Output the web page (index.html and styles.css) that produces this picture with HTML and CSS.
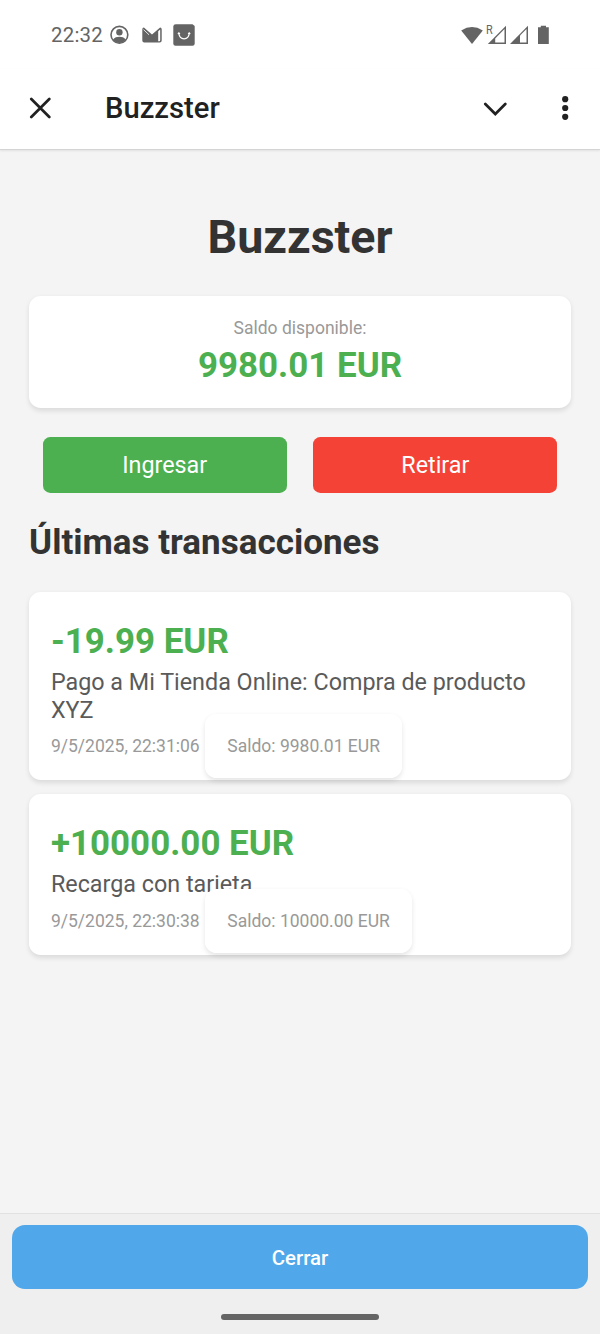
FILE: index.html
```html
<!DOCTYPE html>
<html lang="es">
<head>
<meta charset="utf-8">
<title>Buzzster</title>
<link rel="stylesheet" href="styles.css">
</head>
<body>
<div class="screen">
  <div class="status">
    <span class="time">22:32</span>
    <svg class="s-user" width="20" height="20" viewBox="0 0 20 20"><circle cx="10.4" cy="9.8" r="8.4" fill="none" stroke="#646464" stroke-width="1.6"/><circle cx="10.4" cy="7.3" r="3.2" fill="#646464"/><path d="M4 14.600C5.700 12.500 7.900 11.800 10.400 11.800s4.700.7 6.400 2.800A8.200 8.200 0 0 1 10.400 18a8.200 8.200 0 0 1-6.400-3.400z" fill="#646464"/></svg>
    <svg class="s-mail" width="20" height="16" viewBox="0 0 20 16"><path d="M.3 2.200Q.3.500 1.900.500L10 7.500 18.100.500Q19.700.500 19.700 2.200V13.500Q19.700 15.500 17.700 15.500H2.300Q.3 15.500.3 13.500z" fill="#646464"/><path d="M16.200 4.200V14.300H17.300Q18.200 14.300 18.200 13V2.400z" fill="#fff"/><path d="M1.500 2.600 7 7.800" stroke="#fff" stroke-width=".8"/></svg>
    <svg class="s-bag" width="22" height="22" viewBox="0 0 22 22"><path d="M2.800.300H19.500L21.700 2V19.500Q21.700 21.700 19.500 21.700H2.500Q.3 21.700.3 19.500V2.500Q.3.300 2.800.300z" fill="#646464"/><path d="M5.900 9.300C6.500 16.600 15.600 16.600 16.200 9.300M4.900 10 5.900 8.900l1 1.100M15.200 10 16.200 8.900l1 1.100" fill="none" stroke="#fff" stroke-width="1.200"/></svg>
    <svg class="s-right" width="90" height="32" viewBox="0 -4 90 32"><path d="M1.200 5.500Q12-1.300 22.800 5.500L12 19z" fill="#646464"/><text x="26" y="9" class="roam" textLength="6.700" lengthAdjust="spacingAndGlyphs">R</text><path d="M27.800 19 46 .800V19z" fill="#646464"/><path d="M35.200 17.600V13.400L44.500 4.100V17.600z" fill="#fff"/><path d="M50 19 68 .800V19z" fill="#646464"/><path d="M60 17.600V10.600L66.500 4.100V17.600z" fill="#fff"/><path d="M78 2.300H80.800V.8H86V2.300H88.800V19H78z" fill="#646464"/></svg>
  </div>
  <header class="appbar">
    <svg class="close" width="22" height="22" viewBox="0 0 22 22"><path d="M2.300 2 20.300 20M20.300 2 2.300 20"/></svg>
    <div class="app-name">Buzzster</div>
    <svg class="chevron" width="24" height="14" viewBox="0 0 24 14"><path d="M2.300 2 12.300 12 22.300 2"/></svg>
    <svg class="more" width="8" height="26" viewBox="0 0 8 26"><circle cx="4.200" cy="4.200" r="3.100"/><circle cx="4.200" cy="13" r="3.100"/><circle cx="4.200" cy="21.800" r="3.100"/></svg>
  </header>
  <main class="content">
    <h1 class="title">Buzzster</h1>
    <section class="card balance">
      <div class="label">Saldo disponible:</div>
      <div class="amount">9980.01 EUR</div>
    </section>
    <div class="actions">
      <button class="btn deposit">Ingresar</button>
      <button class="btn withdraw">Retirar</button>
    </div>
    <h2 class="subtitle">Últimas transacciones</h2>
    <section class="list">
      <article class="card transaction">
        <div class="amount">-19.99 EUR</div>
        <div class="description">Pago a Mi Tienda Online: Compra de producto XYZ</div>
        <div class="meta"><span class="date">9/5/2025, 22:31:06</span> <span class="card chip">Saldo: 9980.01 EUR</span></div>
      </article>
      <article class="card transaction">
        <div class="amount">+10000.00 EUR</div>
        <div class="description">Recarga con tarjeta</div>
        <div class="meta"><span class="date">9/5/2025, 22:30:38</span> <span class="card chip">Saldo: 10000.00 EUR</span></div>
      </article>
    </section>
  </main>
  <footer class="footer">
    <button class="close-btn">Cerrar</button>
    <div class="handle"></div>
  </footer>
</div>
</body>
</html>
```
FILE: styles.css
```css
* { box-sizing: border-box; }
body { margin: 0; font-family: Roboto, sans-serif; background: #f4f4f4; }
.screen { width: 600px; height: 1334px; display: flex; flex-direction: column; overflow: hidden; }
svg { display: block; flex: none; }

.status { height: 69px; padding-left: 51px; display: flex; align-items: center; background: #fff; flex: none; }
.time { font-size: 20.4px; line-height: 24px; width: 58px; color: #646464; white-space: nowrap; letter-spacing: .25px; }
.s-mail { margin-left: 12.5px; }
.s-bag { margin-left: 11px; }
.s-right { margin: 4px 0 0 265.5px; }
.roam { font: 400 12.5px Roboto, sans-serif; fill: #646464; }

.appbar { height: 81px; padding: 0 31px 3px 29px; display: flex; align-items: center; background: #fff; border-bottom: 1px solid #d4d4d4; box-shadow: 0 1px 2px rgba(0,0,0,.08); flex: none; z-index: 1; }
.close path, .chevron path { fill: none; stroke: #212121; stroke-width: 2.7; stroke-linecap: round; }
.app-name { margin-left: 54px; font-size: 29.2px; line-height: 34px; font-weight: 500; color: #212121; }
.chevron { margin-left: auto; margin-top: 3px; }
.more { margin-left: 54px; fill: #212121; }

.content { flex: 1; padding: 59px 29.1px 0; }
.title { margin: 0 0 30.6px; height: 56px; font-size: 46.6px; line-height: 56px; font-weight: 700; color: #333; text-align: center; }
.card { background: #fff; border-radius: 11.65px; padding: 21.85px; box-shadow: 0 2.9px 5.8px rgba(0,0,0,.1); }
.balance { height: 112.2px; padding-top: 22.4px; text-align: center; }
.label { font-size: 17.5px; line-height: 20.5px; color: #999; }
.amount { margin: 7.3px 0; font-size: 34.95px; line-height: 41px; font-weight: 700; color: #4caf50; }
.balance .amount { margin: 6.5px 0 0; }

.actions { display: flex; gap: 26.6px; padding: 0 13.6px; margin-top: 29px; }
.btn { flex: 1; height: 56.5px; padding: 0; border: 0; border-radius: 7.3px; color: #fff; font: 400 23.3px Roboto, sans-serif; }
.deposit { background: #4caf50; }
.withdraw { background: #f44336; }
.subtitle { margin: 28.8px 0 29.4px; font-size: 35px; line-height: 41px; font-weight: 700; color: #333; }

.list { display: grid; gap: 14.6px; }
.transaction { padding-top: 21.3px; }
.description { font-size: 23.32px; line-height: 27.3px; color: #5a5a5a; }
.meta { height: 26.8px; margin-top: 7.3px; font-size: 23.3px; line-height: 27.3px; }
.date, .chip { font-size: 17.5px; color: #999; white-space: nowrap; }

.footer { height: 121px; padding: 11px 12px 0; background: #efefef; border-top: 1px solid #e2e2e2; display: flex; flex-direction: column; align-items: center; flex: none; }
.close-btn { width: 100%; height: 64px; padding: 2px 0 0; border: 0; border-radius: 13px; background: #50a7ea; color: #fff; font: 500 20.4px Roboto, sans-serif; }
.handle { width: 158px; height: 6px; margin-top: 24.5px; border-radius: 3px; background: #646464; }
```
